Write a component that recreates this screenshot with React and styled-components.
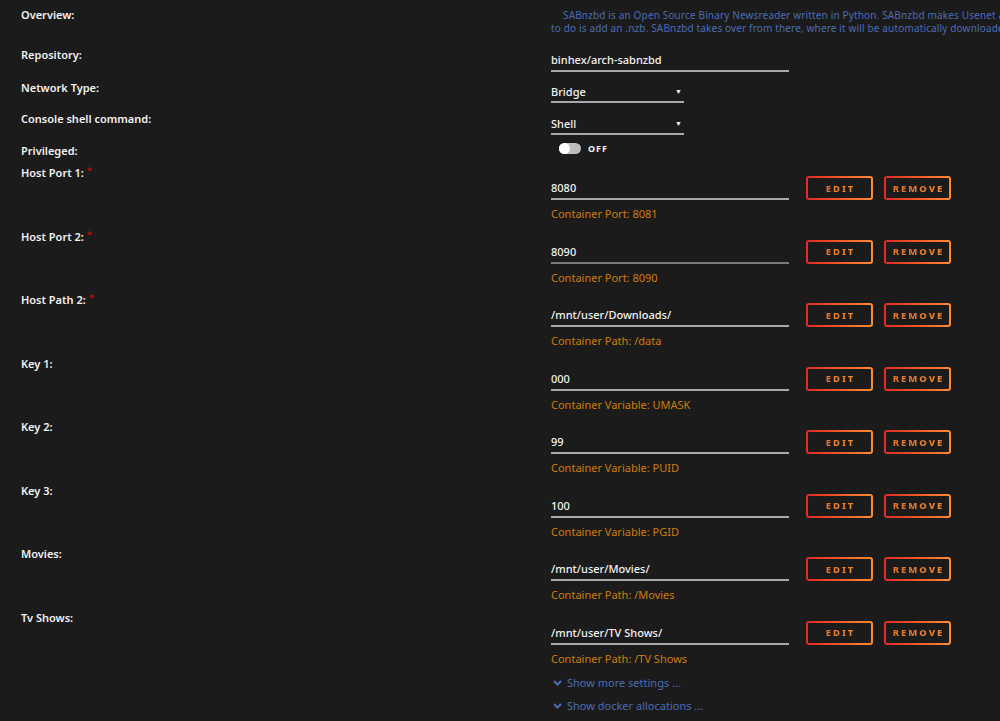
import React from "react";
import styled, { createGlobalStyle } from "styled-components";

const GlobalStyle = createGlobalStyle`
  html, body {
    margin: 0;
    padding: 0;
    background: #1c1b1b;
    overflow: hidden;
  }
  body {
    font-family: "Noto Sans", "Open Sans", sans-serif;
    color: #f2f2f2;
  }
`;

const Page = styled.div`
  width: 1000px;
  height: 721px;
  padding: 8px 0 0 21px;
  box-sizing: border-box;
  overflow: hidden;
`;

const Row = styled.div`
  display: grid;
  grid-template-columns: 530px 1fr;
  height: ${(p) => p.h}px;
`;

const Label = styled.div`
  font-size: 11px;
  line-height: 14px;
  font-weight: 600;
  color: #f2f2f2;
  white-space: nowrap;
`;

const Required = styled.span`
  color: #d00;
  font-size: 9px;
  vertical-align: top;
  margin-left: 3px;
  position: relative;
  top: -2px;
`;

const Field = styled.div`
  display: flex;
  flex-direction: column;
  min-width: 0;
`;

const Description = styled.div`
  color: #4a6cb3;
  font-size: 10px;
  line-height: 13px;
  white-space: nowrap;
  overflow: hidden;
  margin-top: 1px;
  letter-spacing: 0.15px;
`;

const Indent = styled.span`
  padding-left: 12px;
`;

const TextInput = styled.div`
  width: ${(p) => p.w || 238}px;
  height: ${(p) => p.hgt || 24}px;
  box-sizing: border-box;
  border-bottom: 2px solid ${(p) => (p.dim ? "#7a7a7a" : "#a9a9a9")};
  display: flex;
  align-items: center;
  justify-content: space-between;
  font-size: 11px;
  font-weight: 500;
  color: #f2f2f2;
  padding-top: 1px;
`;

const Arrow = styled.span`
  font-size: 7px;
  color: #f2f2f2;
  margin-right: 2px;
`;

const ToggleRow = styled.div`
  display: flex;
  align-items: center;
  gap: 7px;
  margin-left: 8px;
  margin-top: -3px;
  height: 14px;
`;

const Track = styled.div`
  width: 22px;
  height: 11px;
  border-radius: 6px;
  background: #bdbdbd;
  display: flex;
  align-items: center;
`;

const Knob = styled.div`
  width: 11px;
  height: 11px;
  border-radius: 6px;
  background: #fff;
`;

const ToggleText = styled.span`
  font-size: 9px;
  font-weight: 700;
  letter-spacing: 1px;
  color: #f2f2f2;
`;

const InputLine = styled.div`
  display: flex;
  align-items: flex-end;
  margin-top: 10px;
`;

const Buttons = styled.div`
  display: flex;
  gap: 11px;
  margin-left: 17px;
`;

const Button = styled.button`
  width: 67px;
  height: 24px;
  box-sizing: border-box;
  border: 2px solid transparent;
  border-radius: 3px;
  background: linear-gradient(#1c1b1b, #1c1b1b) padding-box,
    linear-gradient(90deg, #e22828, #ff8c2f) border-box;
  padding: 0;
  cursor: pointer;
  display: flex;
  align-items: center;
  justify-content: center;
`;

const ButtonText = styled.span`
  font-family: "Noto Sans", sans-serif;
  font-size: 9.5px;
  font-weight: 800;
  letter-spacing: 2px;
  text-transform: uppercase;
  background: linear-gradient(90deg, #e0702a, #f08a30);
  -webkit-background-clip: text;
  background-clip: text;
  color: transparent;
  margin-left: 2px;
`;

const Hint = styled.div`
  color: #cc7c0c;
  font-size: 11px;
  line-height: 14px;
  margin-top: 7px;
`;

const MoreLink = styled.div`
  display: flex;
  align-items: center;
  gap: 5px;
  color: #4a6cb3;
  font-size: 11px;
  line-height: 14px;
  margin-left: 2px;
  margin-top: ${(p) => p.mt}px;
  cursor: pointer;
`;

const Chevron = () => (
  <svg width="9" height="6" viewBox="0 0 9 6">
    <path d="M1 1 L4.5 4.5 L8 1" fill="none" stroke="#4a6cb3" strokeWidth="2" />
  </svg>
);

const mappings = [
  { label: "Host Port 1:", required: true, value: "8080", hint: "Container Port: 8081" },
  { label: "Host Port 2:", required: true, value: "8090", hint: "Container Port: 8090", dim: true },
  { label: "Host Path 2:", required: true, value: "/mnt/user/Downloads/", hint: "Container Path: /data" },
  { label: "Key 1:", value: "000", hint: "Container Variable: UMASK" },
  { label: "Key 2:", value: "99", hint: "Container Variable: PUID" },
  { label: "Key 3:", value: "100", hint: "Container Variable: PGID" },
  { label: "Movies:", value: "/mnt/user/Movies/", hint: "Container Path: /Movies" },
  { label: "Tv Shows:", value: "/mnt/user/TV Shows/", hint: "Container Path: /TV Shows" },
];

export default function App() {
  return (
    <>
      <GlobalStyle />
      <Page>
        <Row h={40}>
          <Label>Overview:</Label>
          <Description>
            <Indent>
              SABnzbd is an Open Source Binary Newsreader written in Python. SABnzbd makes Usenet as simple and streamlined as possible by automating everything we can. All you have
            </Indent>
            <br />
            to do is add an .nzb. SABnzbd takes over from there, where it will be automatically downloaded, verified, repaired, extracted and filed away with zero human interaction.
          </Description>
        </Row>
        <Row h={33}>
          <Label>Repository:</Label>
          <Field>
            <TextInput>binhex/arch-sabnzbd</TextInput>
          </Field>
        </Row>
        <Row h={31}>
          <Label>Network Type:</Label>
          <Field>
            <TextInput w={133} hgt={22}>
              Bridge<Arrow>▼</Arrow>
            </TextInput>
          </Field>
        </Row>
        <Row h={32}>
          <Label>Console shell command:</Label>
          <Field>
            <TextInput w={133} hgt={23}>
              Shell<Arrow>▼</Arrow>
            </TextInput>
          </Field>
        </Row>
        <Row h={22}>
          <Label>Privileged:</Label>
          <ToggleRow>
            <Track>
              <Knob />
            </Track>
            <ToggleText>OFF</ToggleText>
          </ToggleRow>
        </Row>
        {mappings.map((m) => (
          <Row key={m.label} h={63.57}>
            <Label>
              {m.label}
              {m.required && <Required>*</Required>}
            </Label>
            <Field>
              <InputLine>
                <TextInput dim={m.dim}>{m.value}</TextInput>
                <Buttons>
                  <Button>
                    <ButtonText>Edit</ButtonText>
                  </Button>
                  <Button>
                    <ButtonText>Remove</ButtonText>
                  </Button>
                </Buttons>
              </InputLine>
              <Hint>{m.hint}</Hint>
            </Field>
          </Row>
        ))}
        <Row h={23}>
          <span />
          <MoreLink mt={-7}>
            <Chevron />
            Show more settings ...
          </MoreLink>
        </Row>
        <Row h={23}>
          <span />
          <MoreLink mt={-7}>
            <Chevron />
            Show docker allocations ...
          </MoreLink>
        </Row>
      </Page>
    </>
  );
}
